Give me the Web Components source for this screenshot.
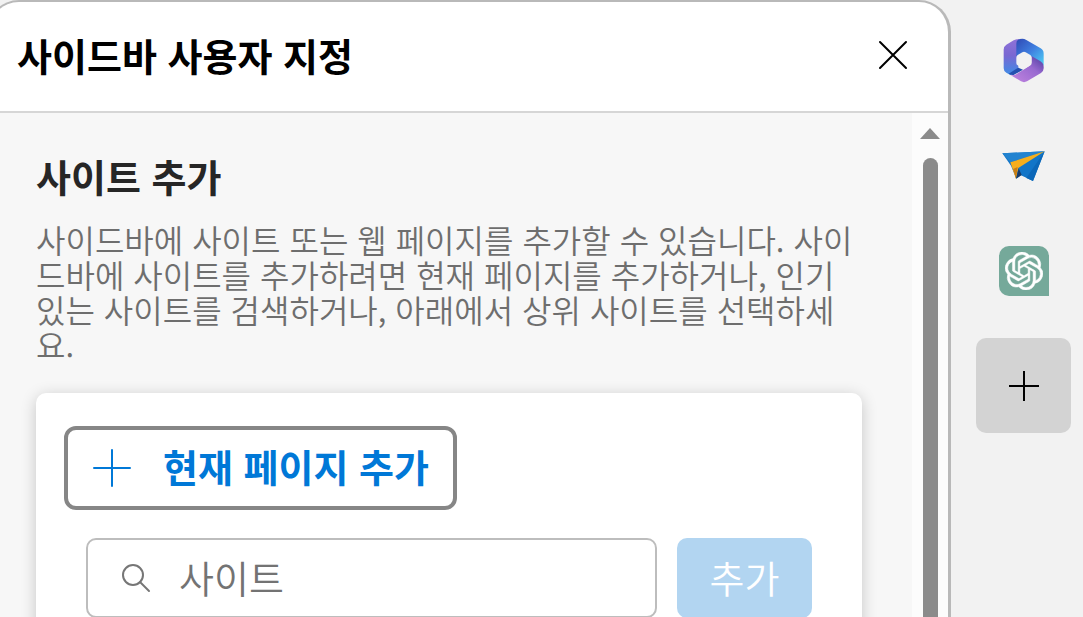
<!DOCTYPE html>
<html lang="ko">
<head>
<meta charset="utf-8">
<meta name="viewport" content="width=device-width, initial-scale=1">
<title>사이드바 사용자 지정</title>
<style>
body {
    margin: 0;
    height: 100vh;
    overflow: hidden;
    background: #f2f2f2;
    color: #262626;
    font-family: "Malgun Gothic", "Noto Sans CJK KR", sans-serif;
}
</style>
</head>
<body>
<sidebar-app></sidebar-app>

<template id="app-template">
<style>
:host {
    display: flex;
    height: 100%;
}
customize-panel {
    flex: 1;
    min-width: 0;
    margin-left: -13px;
}
.gpt {
    display: flex;
    align-items: center;
    justify-content: center;
    width: 50px;
    height: 50px;
    background: #75a99a;
    border-radius: 10px 10px 0 10px;
}
</style>
    <customize-panel heading="사이드바 사용자 지정">
        <site-section heading="사이트 추가">
            사이드바에 사이트 또는 웹 페이지를 추가할 수 있습니다. 사이드바에 사이트를 추가하려면 현재 페이지를 추가하거나, 인기 있는 사이트를 검색하거나, 아래에서 상위 사이트를 선택하세요.
            <add-site-card slot="card"></add-site-card>
        </site-section>
    </customize-panel>
    <side-rail>
        <rail-button label="Microsoft 365">
            <svg width="44" height="48" viewBox="37 22 132 144">
                <defs>
                    <linearGradient id="m-left" x1="0" y1="0" x2="0" y2="1">
                        <stop offset="0" stop-color="#8f72d8"/>
                        <stop offset=".45" stop-color="#7a68d2"/>
                        <stop offset="1" stop-color="#3f8ce6"/>
                    </linearGradient>
                    <linearGradient id="m-top" x1="0" y1="0" x2="1" y2="1">
                        <stop offset="0" stop-color="#2f49b4"/>
                        <stop offset=".5" stop-color="#3f7fe0"/>
                        <stop offset="1" stop-color="#4fd2f5"/>
                    </linearGradient>
                    <linearGradient id="m-bottom" x1="0" y1="1" x2="1" y2="0">
                        <stop offset="0" stop-color="#c386e0"/>
                        <stop offset=".6" stop-color="#9869d0"/>
                        <stop offset="1" stop-color="#4a3a9c"/>
                    </linearGradient>
                </defs>
                <path fill="url(#m-left)" d="M88 28 Q80 28 72 32 L50 45 Q42 50 42 60 V116 Q42 125 50 129 L62 136 L86 121 V78 Z"/>
                <path fill="#2450b0" d="M57 132 L86 114 L100 120 L72 136 Q63 137 57 132 Z"/>
                <path fill="url(#m-top)" d="M80 80 V42 Q80 27 98 27 Q104 27 110 31 L153 56 Q162 61 162 72 V108 Q158 98 146 93 L125 81 L103 69 Z"/>
                <path fill="url(#m-bottom)" d="M125 79 L150 93 Q162 99 162 112 V116 Q162 125 154 130 L112 155 Q103 160 94 155 L62 136 Q72 138 82 132 L118 110 Q125 106 125 98 Z"/>
                <path fill="#f2f2f2" d="M98 68 Q103 65 108 68 L122 76 Q126 79 126 84 V100 Q126 105 122 107 L108 115 Q103 118 98 115 L84 107 Q80 105 80 100 V84 Q80 79 84 76 Z"/>
            </svg>
        </rail-button>
        <rail-button label="보내기">
            <svg width="44" height="32" viewBox="33 31 132 96">
                <path fill="#1175c8" d="M34 41 L161 35 L126 124 L90 107 L76 117 L60 78 Z"/>
                <path fill="#2283d0" d="M34 41 L161 35 L58 68 Z"/>
                <path fill="#0b67b8" d="M161 35 L126 124 L106 115 Z"/>
                <path fill="#f5ae1e" d="M58 68 L161 35 L82 85 L75 117 Z"/>
                <path fill="#c77d16" d="M66 88 L80 82 L75 117 Z"/>
                <path fill="#183b69" d="M75 117 L83 86 L92 106 Z"/>
            </svg>
        </rail-button>
        <rail-button label="ChatGPT">
            <span class="gpt">
                <svg width="38" height="38" viewBox="0 0 24 24" fill="#fff" stroke="#fff" stroke-width=".3"><path d="M22.2819 9.8211a5.9847 5.9847 0 0 0-.5157-4.9108 6.0462 6.0462 0 0 0-6.5098-2.9A6.0651 6.0651 0 0 0 4.9807 4.1818a5.9847 5.9847 0 0 0-3.9977 2.9 6.0462 6.0462 0 0 0 .7427 7.0966 5.98 5.98 0 0 0 .511 4.9107 6.051 6.051 0 0 0 6.5146 2.9001A5.9847 5.9847 0 0 0 13.2599 24a6.0557 6.0557 0 0 0 5.7718-4.2058 5.9894 5.9894 0 0 0 3.9977-2.9001 6.0557 6.0557 0 0 0-.7475-7.0729zm-9.022 12.6081a4.4755 4.4755 0 0 1-2.8764-1.0408l.1419-.0804 4.7783-2.7582a.7948.7948 0 0 0 .3927-.6813v-6.7369l2.02 1.1686a.071.071 0 0 1 .038.052v5.5826a4.504 4.504 0 0 1-4.4945 4.4944zm-9.6607-4.1254a4.4708 4.4708 0 0 1-.5346-3.0137l.142.0852 4.783 2.7582a.7712.7712 0 0 0 .7806 0l5.8428-3.3685v2.3324a.0804.0804 0 0 1-.0332.0615L9.74 19.9502a4.4992 4.4992 0 0 1-6.1408-1.6464zM2.3408 7.8956a4.485 4.485 0 0 1 2.3655-1.9728V11.6a.7664.7664 0 0 0 .3879.6765l5.8144 3.3543-2.0201 1.1685a.0757.0757 0 0 1-.071 0l-4.8303-2.7865A4.504 4.504 0 0 1 2.3408 7.872zm16.5963 3.8558L13.1038 8.364 15.1192 7.2a.0757.0757 0 0 1 .071 0l4.8303 2.7913a4.4944 4.4944 0 0 1-.6765 8.1042v-5.6772a.79.79 0 0 0-.407-.667zm2.0107-3.0231l-.142-.0852-4.7735-2.7818a.7759.7759 0 0 0-.7854 0L9.409 9.2297V6.8974a.0662.0662 0 0 1 .0284-.0615l4.8303-2.7866a4.4992 4.4992 0 0 1 6.6802 4.66zM8.3065 12.863l-2.02-1.1638a.0804.0804 0 0 1-.038-.0567V6.0742a4.4992 4.4992 0 0 1 7.3757-3.4537l-.142.0805L8.704 5.459a.7948.7948 0 0 0-.3927.6813zm1.0976-2.3654l2.602-1.4998 2.6069 1.4998v2.9994l-2.5974 1.4997-2.6067-1.4997Z"/></svg>
            </span>
        </rail-button>
        <rail-button class="add" label="사이드바에 추가" active>
            <svg width="30" height="30" viewBox="0 0 30 30" stroke="#000" stroke-width="2"><path d="M15 0V30M0 15H30"/></svg>
        </rail-button>
    </side-rail>
</template>

<template id="panel-template">
<style>
:host {
    display: flex;
    flex-direction: column;
    box-sizing: border-box;
    overflow: hidden;
    background: #fff;
    border: 2px solid #b9b9b9;
    border-right-width: 3px;
    border-bottom: 0;
    border-radius: 32px 32px 0 0;
}
header {
    display: flex;
    align-items: center;
    justify-content: space-between;
    box-sizing: border-box;
    height: 111px;
    padding: 0 36px 4px 28px;
    border-bottom: 2px solid #d6d6d6;
}
h1 {
    margin: 0;
    color: #000;
    font-size: 38px;
    line-height: 50px;
    font-weight: 700;
}
button {
    display: flex;
    padding: 4px;
    border: 0;
    background: none;
}
.body {
    display: flex;
    flex: 1;
    min-height: 0;
    background: #f7f7f7;
}
.content {
    flex: 1;
    min-width: 0;
    overflow: hidden;
    padding: 38px 50px 0 47px;
}
</style>
    <header>
        <h1></h1>
        <button type="button" aria-label="닫기">
            <svg width="30" height="30" viewBox="0 0 30 30" fill="none" stroke="#000" stroke-width="2" stroke-linecap="round"><path d="M2 2L28 28M28 2L2 28"/></svg>
        </button>
    </header>
    <div class="body">
        <div class="content"><slot></slot></div>
        <panel-scrollbar></panel-scrollbar>
    </div>
</template>

<template id="scrollbar-template">
<style>
:host {
    display: flex;
    flex-direction: column;
    align-items: center;
    gap: 19px;
    box-sizing: border-box;
    width: 36px;
    padding-top: 15px;
    background: #fcfcfc;
}
.thumb {
    flex: 1;
    width: 15px;
    background: #8b8b8b;
    border-radius: 8px 8px 0 0;
}
</style>
    <svg width="20" height="11" viewBox="0 0 20 11"><path fill="#8b8b8b" d="M10 0L20 11H0Z"/></svg>
    <div class="thumb"></div>
</template>

<template id="section-template">
<style>
:host {
    display: block;
}
h2 {
    margin: 0 0 21px;
    font-size: 38px;
    line-height: 50px;
    font-weight: 700;
}
p {
    margin: 0 0 31px;
    color: #6e6e6e;
    font-size: 32px;
    line-height: 35px;
    font-weight: 350;
}
</style>
    <h2></h2>
    <p><slot></slot></p>
    <slot name="card"></slot>
</template>

<template id="card-template">
<style>
:host {
    display: block;
    padding: 33px 28px 40px;
    background: #fff;
    border-radius: 10px;
    box-shadow: 0 3px 16px rgba(0, 0, 0, .2);
}
button, input {
    font-family: inherit;
    font-size: 38px;
    line-height: 50px;
}
.current {
    display: flex;
    align-items: center;
    gap: 32px;
    height: 84px;
    padding: 0 24px 0 25px;
    color: #0078d7;
    font-weight: 700;
    background: #fff;
    border: 4px solid #868686;
    border-radius: 12px;
}
.current span {
    padding-bottom: 4px;
}
form {
    display: flex;
    gap: 20px;
    margin: 28px 22px 0;
}
label {
    display: flex;
    align-items: center;
    gap: 28px;
    flex: 1;
    min-width: 0;
    box-sizing: border-box;
    height: 80px;
    padding: 0 33px;
    border: 2px solid #bdbdbd;
    border-radius: 10px;
}
svg {
    flex: none;
}
input {
    flex: 1;
    min-width: 0;
    padding: 0 0 2px;
    border: 0;
    outline: 0;
    background: none;
    font-weight: 350;
}
input::placeholder {
    color: #737373;
    opacity: 1;
}
.submit {
    width: 135px;
    height: 80px;
    padding: 0 0 2px;
    color: #fff;
    font-weight: 350;
    background: #b2d5f1;
    border: 0;
    border-radius: 10px;
}
</style>
    <button class="current" type="button">
        <svg width="38" height="38" viewBox="0 0 38 38" stroke="#0078d7" stroke-width="2" stroke-linecap="round"><path d="M19 1V37M1 19H37"/></svg>
        <span>현재 페이지 추가</span>
    </button>
    <form>
        <label>
            <svg width="30" height="30" viewBox="0 0 30 30" fill="none" stroke="#767676" stroke-width="2" stroke-linecap="round"><circle cx="12" cy="12" r="10"/><path d="M19 19L28 28"/></svg>
            <input type="text" placeholder="사이트" aria-label="사이트">
        </label>
        <button class="submit" type="button">추가</button>
    </form>
</template>

<template id="rail-template">
<style>
:host {
    display: flex;
    flex-direction: column;
    gap: 10px;
    width: 95px;
    padding: 13px 12px 0 25px;
}
::slotted(.add) {
    margin-top: 10px;
}
</style>
    <slot></slot>
</template>

<template id="rail-button-template">
<style>
:host {
    display: block;
}
button {
    display: flex;
    align-items: center;
    justify-content: center;
    width: 100%;
    height: 95px;
    padding: 0;
    background: none;
    border: 0;
    border-radius: 10px;
}
:host([active]) button {
    background: #d3d3d3;
}
</style>
    <button type="button"><slot></slot></button>
</template>

<script>
class TemplateElement extends HTMLElement {
    constructor() {
        super();
        this.attachShadow({ mode: 'open' });
        const template = document.getElementById(this.constructor.templateId);
        this.shadowRoot.appendChild(template.content.cloneNode(true));
    }
}

class PanelScrollbar extends TemplateElement {
    static templateId = 'scrollbar-template';
}

class CustomizePanel extends TemplateElement {
    static templateId = 'panel-template';

    connectedCallback() {
        this.shadowRoot.querySelector('h1').textContent = this.getAttribute('heading');
    }
}

class SiteSection extends TemplateElement {
    static templateId = 'section-template';

    connectedCallback() {
        this.shadowRoot.querySelector('h2').textContent = this.getAttribute('heading');
    }
}

class AddSiteCard extends TemplateElement {
    static templateId = 'card-template';
}

class SideRail extends TemplateElement {
    static templateId = 'rail-template';
}

class RailButton extends TemplateElement {
    static templateId = 'rail-button-template';

    connectedCallback() {
        this.shadowRoot.querySelector('button').setAttribute('aria-label', this.getAttribute('label'));
    }
}

class SidebarApp extends TemplateElement {
    static templateId = 'app-template';
}

customElements.define('panel-scrollbar', PanelScrollbar);
customElements.define('customize-panel', CustomizePanel);
customElements.define('site-section', SiteSection);
customElements.define('add-site-card', AddSiteCard);
customElements.define('side-rail', SideRail);
customElements.define('rail-button', RailButton);
customElements.define('sidebar-app', SidebarApp);
</script>
</body>
</html>
